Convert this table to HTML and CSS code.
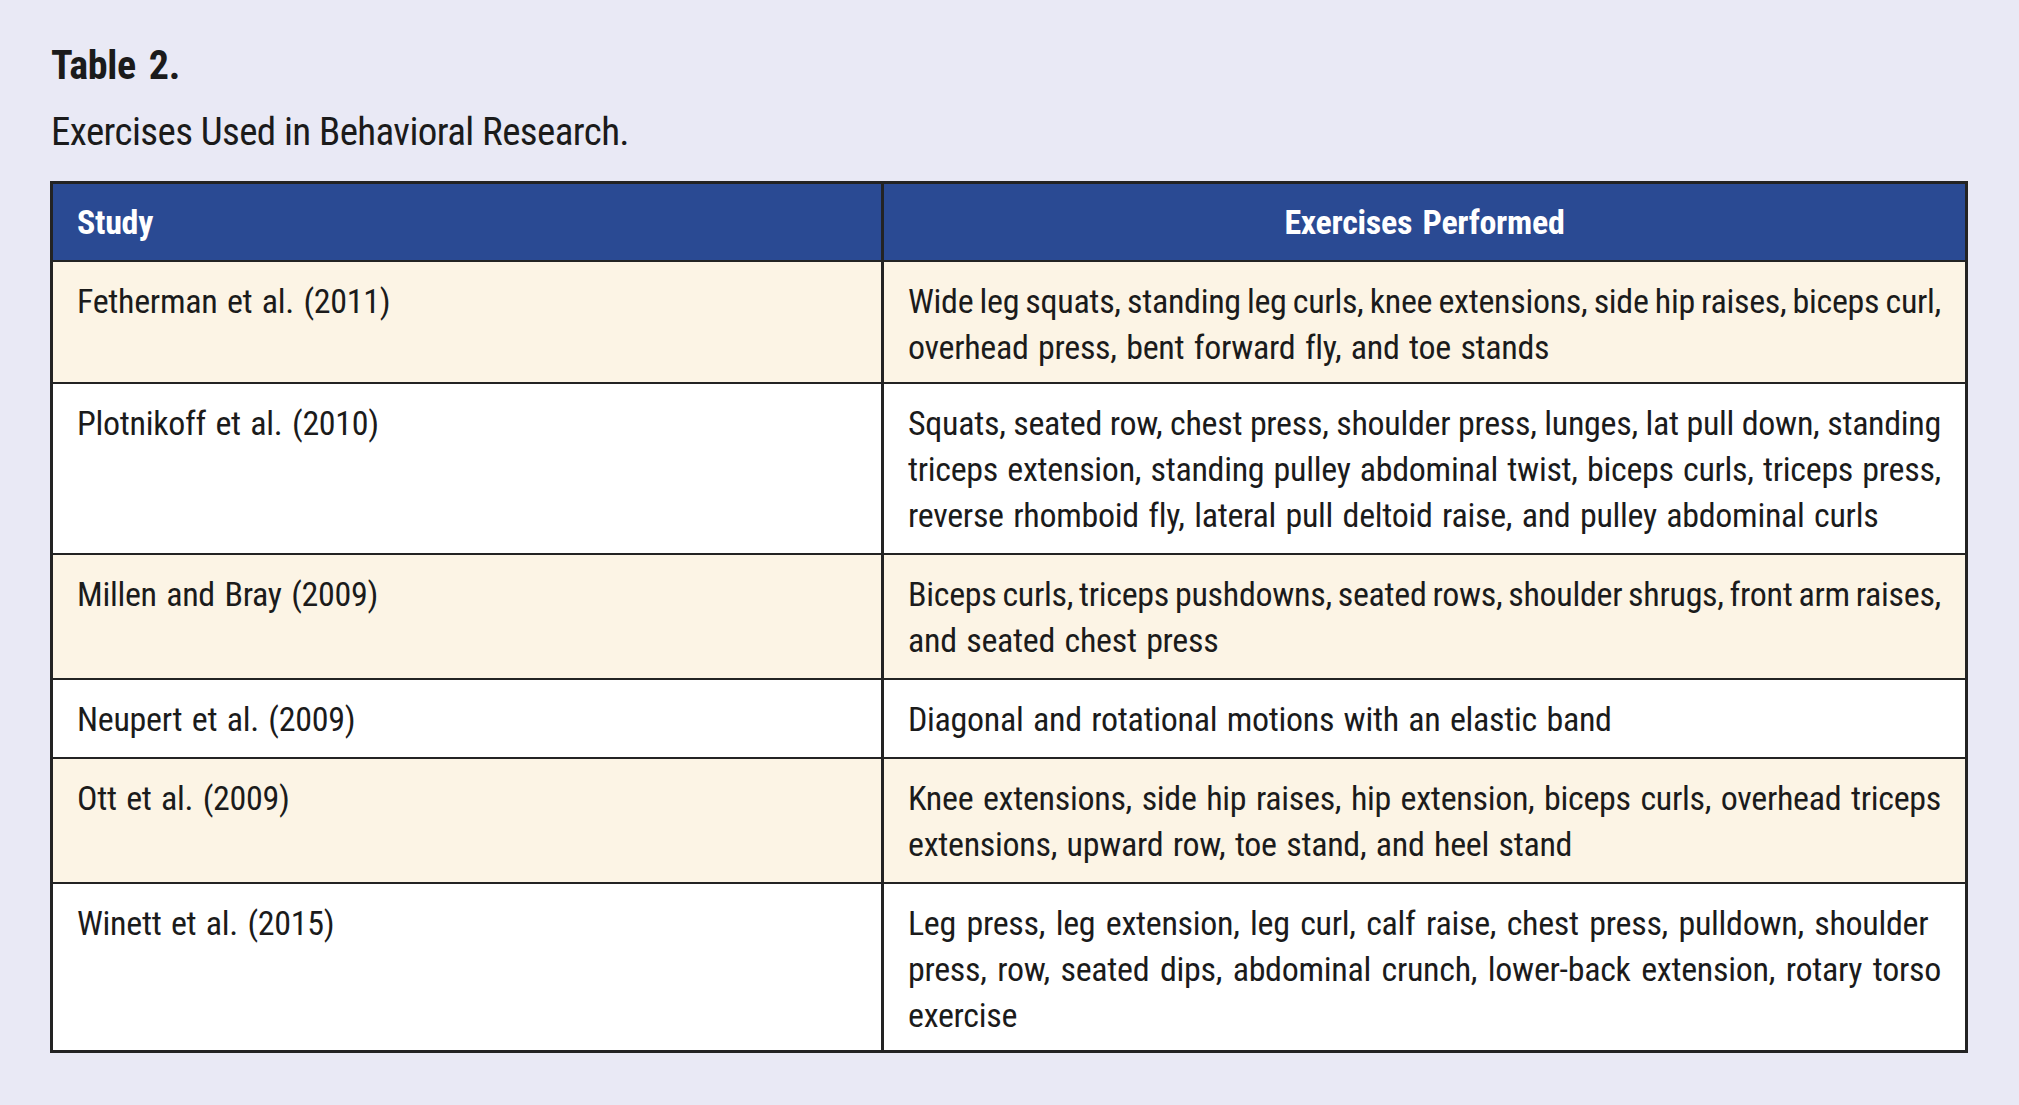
FILE: index.html
```html
<!DOCTYPE html>
<html lang="en">
<head>
<meta charset="utf-8">
<title>Table 2. Exercises Used in Behavioral Research.</title>
<link rel="stylesheet" href="styles.css">
</head>
<body>
<div class="page">
  <h1 class="title">Table 2.</h1>
  <p class="caption">Exercises Used in Behavioral Research.</p>
  <table class="ex-table">
    <colgroup>
      <col class="col-study">
      <col class="col-ex">
    </colgroup>
    <thead>
      <tr>
        <th class="th-study">Study</th>
        <th class="th-ex">Exercises Performed</th>
      </tr>
    </thead>
    <tbody>
      <tr class="odd first">
        <td>Fetherman et al. (2011)</td>
        <td class="ex"><span class="ln j">Wide leg squats, standing leg curls, knee extensions, side hip raises, biceps curl,</span><span class="ln">overhead press, bent forward fly, and toe stands</span></td>
      </tr>
      <tr class="even">
        <td>Plotnikoff et al. (2010)</td>
        <td class="ex"><span class="ln j">Squats, seated row, chest press, shoulder press, lunges, lat pull down, standing</span><span class="ln j">triceps extension, standing pulley abdominal twist, biceps curls, triceps press,</span><span class="ln">reverse rhomboid fly, lateral pull deltoid raise, and pulley abdominal curls</span></td>
      </tr>
      <tr class="odd">
        <td>Millen and Bray (2009)</td>
        <td class="ex"><span class="ln j">Biceps curls, triceps pushdowns, seated rows, shoulder shrugs, front arm raises,</span><span class="ln">and seated chest press</span></td>
      </tr>
      <tr class="even">
        <td>Neupert et al. (2009)</td>
        <td class="ex"><span class="ln">Diagonal and rotational motions with an elastic band</span></td>
      </tr>
      <tr class="odd">
        <td>Ott et al. (2009)</td>
        <td class="ex"><span class="ln j">Knee extensions, side hip raises, hip extension, biceps curls, overhead triceps</span><span class="ln">extensions, upward row, toe stand, and heel stand</span></td>
      </tr>
      <tr class="even last">
        <td>Winett et al. (2015)</td>
        <td class="ex"><span class="ln loose">Leg press, leg extension, leg curl, calf raise, chest press, pulldown, shoulder</span><span class="ln j">press, row, seated dips, abdominal crunch, lower-back extension, rotary torso</span><span class="ln">exercise</span></td>
      </tr>
    </tbody>
  </table>
</div>
</body>
</html>
```

FILE: styles.css
```css
html, body {
  margin: 0;
  padding: 0;
  background: #e9e9f5;
}

body {
  font-family: "Roboto Condensed", "Liberation Sans", sans-serif;
  color: #1b1b1b;
  width: 2019px;
  height: 1105px;
  overflow: hidden;
}

.page {
  padding: 42px 0 0 51px;
}

.title {
  margin: 0;
  font-size: 40px;
  line-height: 48px;
  font-weight: bold;
  letter-spacing: -0.3px;
  word-spacing: 4px;
}

.caption {
  margin: 18px 0 0 0;
  font-size: 39px;
  line-height: 48px;
  letter-spacing: -0.6px;
  word-spacing: 0;
}

.ex-table {
  margin: 25px 0 0 -1px;
  width: 1918px;
  border-collapse: collapse;
  table-layout: fixed;
  border: 3px solid #232323;
  font-size: 34px;
  line-height: 46px;
  letter-spacing: -0.3px;
}

.col-study {
  width: 831px;
}

.ex-table th,
.ex-table td {
  border: 2px solid #232323;
  padding: 16px 24px 15px 24px;
  vertical-align: top;
  text-align: left;
  word-spacing: 2px;
}

.ex-table th {
  padding-top: 15px;
  padding-bottom: 15px;
  border-right-width: 3px;
  background: #2a4a93;
  color: #ffffff;
  font-weight: bold;
  word-spacing: 3px;
}

.ex-table td:first-child {
  border-right-width: 3px;
}

.ex-table .th-ex {
  text-align: center;
}

.ex-table .first td {
  padding-bottom: 12px;
}

.ex-table .last td {
  padding-bottom: 12px;
}

.ln {
  display: block;
}

.ln.j {
  text-align: justify;
  text-align-last: justify;
  word-spacing: -3.5px;
}

.ln.loose {
  word-spacing: 3px;
}

.odd td {
  background: #fcf4e5;
}

.even td {
  background: #ffffff;
}
```
